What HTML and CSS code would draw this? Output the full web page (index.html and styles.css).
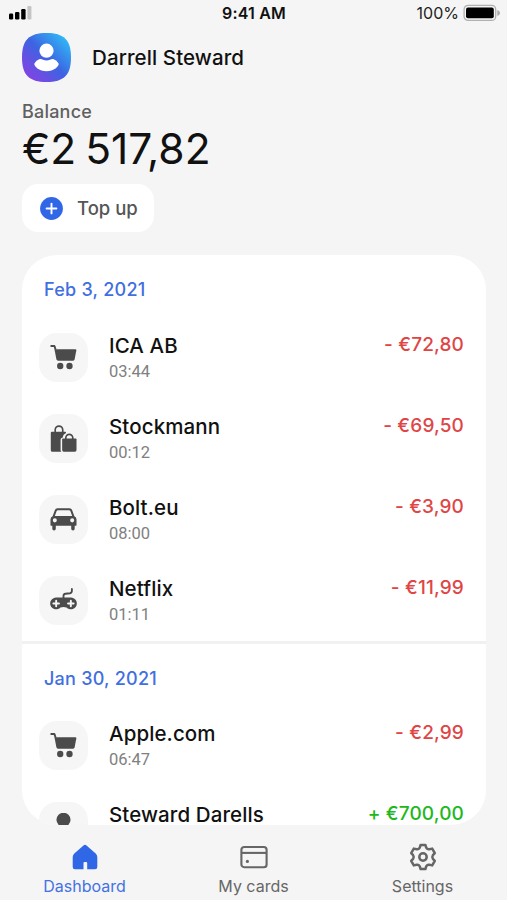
FILE: index.html
```
<!DOCTYPE html>
<html lang="en">
    <head>
        <meta charset="utf-8">
        <title>Dashboard</title>
        <link rel="stylesheet" href="styles.css">
    </head>
    <body>
        <svg class="sprite" width="0" height="0">
            <symbol id="cart" viewBox="0 0 28 28">
                <path d="M1.3 2.1H4.6L5.6 5" fill="none" stroke="#4b4b4b" stroke-width="2" stroke-linecap="round" stroke-linejoin="round"/>
                <path d="M4.6 5.5H26.2Q27.5 5.5 27.3 6.8L25.5 16.2Q25.2 17.4 24 17.4H8.3Q7 17.4 6.7 16.2Z"/>
                <circle cx="10.6" cy="22.8" r="3.3"/>
                <circle cx="20.2" cy="22.8" r="3.3"/>
            </symbol>
        </svg>

        <div class="status">
            <svg class="signal" width="24" height="16" viewBox="0 0 24 16">
                <rect x="0" y="9.5" width="4.2" height="6" rx="1.2"/>
                <rect x="6" y="8" width="4.4" height="7.5" rx="1.2"/>
                <rect x="12.2" y="5" width="4.4" height="10.5" rx="1.2"/>
                <rect x="18.4" y="2" width="4" height="13.5" rx="1.2" fill="#c4c4c4"/>
            </svg>
            <span class="clock">9:41 AM</span>
            <span class="charge">100%</span>
            <svg width="38" height="18" viewBox="0 0 38 18">
                <rect x="1.1" y="1.4" width="31.6" height="15" rx="4" fill="none" stroke="#b0b0b0" stroke-width="1.3"/>
                <rect x="3" y="3.5" width="27.8" height="10.8" rx="2"/>
                <path d="M34.3 6Q37 7 37 9T34.3 12Z" fill="#aaa"/>
            </svg>
        </div>

        <div class="profile">
            <svg width="49" height="49" viewBox="0 0 49 49">
                <defs>
                    <linearGradient id="avatar" x1="0" y1="1" x2="1" y2="0">
                        <stop offset="0.04" stop-color="#8a3ee8"/>
                        <stop offset="0.28" stop-color="#6750e2"/>
                        <stop offset="0.5" stop-color="#3d63e2"/>
                        <stop offset="0.88" stop-color="#30b4f5"/>
                    </linearGradient>
                </defs>
                <path d="M24.5 0C42 0 49 7 49 24.5S42 49 24.5 49 0 42 0 24.5 7 0 24.5 0Z" fill="url(#avatar)"/>
                <circle cx="24.5" cy="17.7" r="7.1" fill="#fff"/>
                <path d="M17.7 26.1C19 25.6 20 26.3 21 26.8Q24.5 28.3 28 26.8C29 26.3 30 25.6 31.3 26.1Q35 27.4 36.6 30.4C37.6 33 31.5 38.2 24.5 38.2S11.4 33 12.4 30.4Q14 27.4 17.7 26.1Z" fill="#fff"/>
            </svg>
            <span class="name">Darrell Steward</span>
        </div>

        <div class="balance">
            <div class="label">Balance</div>
            <div class="total">€2 517,82</div>
            <button class="topup">
                <svg width="23" height="23" viewBox="0 0 23 23">
                    <circle cx="11.5" cy="11.5" r="11.4" fill="#3067e7"/>
                    <path d="M11.5 6.6V16.4M6.6 11.5H16.4" stroke="#fff" stroke-width="1.9" stroke-linecap="round"/>
                </svg>
                <span>Top up</span>
            </button>
        </div>

        <div class="card">
            <div class="day">
                <div class="date">Feb 3, 2021</div>
                <div class="row">
                    <div class="tile"><svg width="27" height="27"><use href="#cart"/></svg></div>
                    <div class="info">
                        <div class="title">ICA AB</div>
                        <div class="time">03:44</div>
                    </div>
                    <div class="amount">- €72,80</div>
                </div>
                <div class="row">
                    <div class="tile">
                        <svg width="27" height="27" viewBox="0 0 28 28">
                            <path d="M5.4 8V5A3.9 3.9 0 0 1 13.2 5V8" fill="none" stroke="#4b4b4b" stroke-width="1.7"/>
                            <path d="M2 7H15.8Q16.8 7 16.6 8.4Q13.5 9.6 13 13.2Q11 13.4 11 15V26Q11 27.5 12 27.8H2.5Q.8 27.8 .8 26.2V8.2Q.8 7 2 7Z"/>
                            <path d="M16.4 15.5V13.3A3.6 3.6 0 0 1 23.6 13.3V15.5" fill="none" stroke="#4b4b4b" stroke-width="1.7"/>
                            <path d="M13.5 14H26.5Q27.5 14 27.5 15V26Q27.5 27.8 25.8 27.8H14.3Q12.6 27.8 12.6 26V15Q12.6 14 13.5 14Z"/>
                        </svg>
                    </div>
                    <div class="info">
                        <div class="title">Stockmann</div>
                        <div class="time">00:12</div>
                    </div>
                    <div class="amount">- €69,50</div>
                </div>
                <div class="row">
                    <div class="tile">
                        <svg width="27" height="27" viewBox="0 0 28 28">
                            <path fill-rule="evenodd" d="M7.7 2.3H20.3Q22.1 2.3 22.8 4L25.3 10.6Q27.5 11.3 27.5 14V19.7Q27.5 20.6 26.5 20.6H25.6V23.6A1.8 1.8 0 0 1 22 23.6V20.6H6V23.6A1.8 1.8 0 0 1 2.4 23.6V20.6H1.5Q.5 20.6 .5 19.7V14Q.5 11.3 2.7 10.6L5.2 4Q5.9 2.3 7.7 2.3ZM8.2 4.4Q7.2 4.4 6.9 5.3L5 10.3H23L21.1 5.3Q20.8 4.4 19.8 4.4ZM5 12.8A2.1 2.1 0 1 0 5 17A2.1 2.1 0 1 0 5 12.8ZM23 12.8A2.1 2.1 0 1 0 23 17A2.1 2.1 0 1 0 23 12.8Z"/>
                        </svg>
                    </div>
                    <div class="info">
                        <div class="title">Bolt.eu</div>
                        <div class="time">08:00</div>
                    </div>
                    <div class="amount">- €3,90</div>
                </div>
                <div class="row">
                    <div class="tile">
                        <svg width="27" height="27" viewBox="0 0 28 28">
                            <path d="M14 12.5V9.3Q14 7.2 16 7L20.8 6.5Q22.7 6.2 22.7 4V2" fill="none" stroke="#4b4b4b" stroke-width="1.9" stroke-linecap="round"/>
                            <path d="M6.6 11H21.4A6.1 6.1 0 1 1 17.2 21.2Q14 20.2 10.8 21.2A6.1 6.1 0 1 1 6.6 11Z"/>
                            <path d="M6.4 14.2V20M3.5 17.1H9.3M21.6 14.2V20M18.7 17.1H24.5" stroke="#f6f6f6" stroke-width="2" stroke-linecap="round"/>
                        </svg>
                    </div>
                    <div class="info">
                        <div class="title">Netflix</div>
                        <div class="time">01:11</div>
                    </div>
                    <div class="amount">- €11,99</div>
                </div>
            </div>
            <div class="day">
                <div class="date">Jan 30, 2021</div>
                <div class="row">
                    <div class="tile"><svg width="27" height="27"><use href="#cart"/></svg></div>
                    <div class="info">
                        <div class="title">Apple.com</div>
                        <div class="time">06:47</div>
                    </div>
                    <div class="amount">- €2,99</div>
                </div>
                <div class="row">
                    <div class="tile">
                        <svg width="27" height="27" viewBox="0 0 28 28">
                            <circle cx="14" cy="7" r="7.3"/>
                            <path d="M7 16Q14 20 21 16Q26 18 26 22Q21 28 14 28T2 22Q2 18 7 16Z"/>
                        </svg>
                    </div>
                    <div class="info">
                        <div class="title">Steward Darells</div>
                    </div>
                    <div class="amount plus">+ €700,00</div>
                </div>
            </div>
        </div>

        <div class="tabs">
            <div class="tab active">
                <svg width="28" height="28" viewBox="0 0 28 28">
                    <path d="M12.5 2.4Q14 1.2 15.5 2.4L24.7 10.4Q26.3 11.9 26.3 13.9V24Q26.3 26.3 24 26.3H16.2V20Q16.2 19 15.2 19H13.5Q12.5 19 12.5 20V26.3H4Q1.7 26.3 1.7 24V13.9Q1.7 11.9 3.3 10.4Z" fill="#3067e7"/>
                </svg>
                <span>Dashboard</span>
            </div>
            <div class="tab">
                <svg width="28" height="28" viewBox="0 0 28 28" fill="none" stroke="#666" stroke-width="2.1">
                    <rect x="1.4" y="4" width="25.2" height="20.2" rx="2.8"/>
                    <path d="M1.4 9.9H26.6"/>
                    <circle cx="7.4" cy="18.4" r="1.6" fill="#666" stroke="none"/>
                </svg>
                <span>My cards</span>
            </div>
            <div class="tab">
                <svg width="28" height="28" viewBox="0 0 28 28" fill="none" stroke="#666" stroke-width="2.5" stroke-linejoin="round">
                    <path d="M11.6 1.9H16.4L17.2 4.6Q18.4 6.6 20.3 6.2L23.2 5.6L25.8 10.1L23.9 12.1Q22.7 14 23.9 15.9L25.8 17.9L23.2 22.4L20.3 21.8Q18.4 21.4 17.2 23.4L16.4 26.1H11.6L10.8 23.4Q9.6 21.4 7.7 21.8L4.8 22.4L2.2 17.9L4.1 15.9Q5.3 14 4.1 12.1L2.2 10.1L4.8 5.6L7.7 6.2Q9.6 6.6 10.8 4.6Z"/>
                    <circle cx="14" cy="14" r="3.7"/>
                </svg>
                <span>Settings</span>
            </div>
        </div>
    </body>
</html>
```
FILE: styles.css
```
*{
    box-sizing: border-box;
}
body{
    margin: 0;
    height: 900px;
    overflow: hidden;
    display: flex;
    flex-direction: column;
    background-color: #f5f5f5;
    color: #111;
    font-family: Inter, "Liberation Sans", sans-serif;
}
svg{
    display: block;
    flex: none;
}
.sprite{
    display: none;
}
.status{
    display: grid;
    grid-template-columns: 1fr auto 1fr 38px;
    height: 33px;
    padding: 4px 6px 0 9px;
    align-items: start;
    line-height: 18px;
    flex: none;
}
.clock{
    font-size: 16px;
    font-weight: 600;
    letter-spacing: 0.2px;
    margin-left: 36px;
}
.charge{
    font-size: 16px;
    text-align: right;
    color: #222;
    padding-right: 4px;
}
.profile{
    display: flex;
    align-items: center;
    gap: 21px;
    height: 49px;
    padding-left: 22px;
    flex: none;
}
.name{
    font-size: 20.5px;
    font-weight: 500;
    letter-spacing: 0.1px;
}
.balance{
    padding: 19px 22px 0;
    height: 173px;
    flex: none;
}
.label{
    font-size: 18px;
    font-weight: 500;
    line-height: 22px;
    letter-spacing: 0.2px;
    color: #606060;
}
.total{
    font-size: 42.5px;
    line-height: 50px;
    margin-top: 1px;
    word-spacing: -3px;
}
.topup{
    display: flex;
    align-items: center;
    gap: 14px;
    width: 132px;
    height: 48px;
    margin-top: 10px;
    padding: 0 0 0 18px;
    border: none;
    border-radius: 16px;
    background-color: white;
    color: #555;
    font-family: inherit;
    font-size: 18.5px;
    font-weight: 500;
}
.card{
    width: 464px;
    height: 570px;
    margin-left: 22px;
    border-radius: 35px;
    background-color: white;
    overflow: hidden;
    flex: none;
}
.day + .day{
    border-top: 3px solid #f1f1f1;
}
.date{
    padding: 23px 22px 0;
    height: 62px;
    line-height: 24px;
    font-size: 18px;
    font-weight: 500;
    letter-spacing: 0.25px;
    color: #3f6fe0;
}
.row{
    display: flex;
    height: 81px;
    padding: 16px 22px 0 17px;
}
.day + .day .row{
    margin-top: -1px;
    margin-bottom: 1px;
}
.tile{
    display: flex;
    align-items: center;
    justify-content: center;
    width: 49px;
    height: 49px;
    border-radius: 18px;
    background-color: #f6f6f6;
    fill: #4b4b4b;
}
.info{
    flex: 1;
    margin-left: 21px;
}
.title{
    font-size: 20.5px;
    font-weight: 500;
    line-height: 26px;
    letter-spacing: 0.1px;
}
.time{
    font-family: Roboto, sans-serif;
    font-size: 16.5px;
    line-height: 26px;
    color: #808080;
}
.amount{
    font-size: 19px;
    font-weight: 500;
    line-height: 24px;
    letter-spacing: 0.15px;
    color: #e04545;
}
.plus{
    color: #20b820;
}
.tabs{
    display: grid;
    grid-template-columns: repeat(3, 1fr);
    padding: 18px 0 0;
}
.tab{
    display: flex;
    flex-direction: column;
    align-items: center;
    gap: 4px;
    font-size: 16px;
    line-height: 22px;
    color: #666;
}
.active{
    color: #4272e4;
}
```
